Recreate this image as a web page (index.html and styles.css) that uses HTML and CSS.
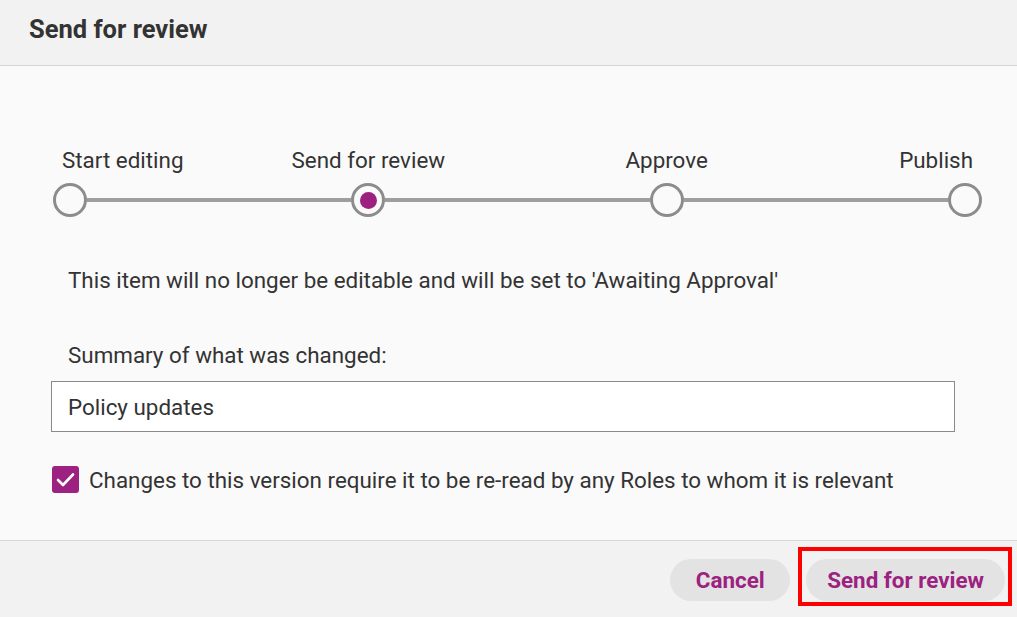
FILE: index.html
```html
<!DOCTYPE html>
<html lang="en">
<head>
    <meta charset="UTF-8">
    <meta name="viewport" content="width=device-width, initial-scale=1.0">
    <title>Send for review</title>
    <link rel="stylesheet" href="styles.css">
</head>
<body>
    <div class="dialog">
        <div class="dialog-header">
            <h2>Send for review</h2>
        </div>

        <div class="dialog-body">
            <!-- Workflow steps -->
            <div class="stepper">
                <div class="step first">
                    <span class="step-label">Start editing</span>
                    <span class="step-dot"></span>
                </div>
                <div class="step-line"></div>
                <div class="step">
                    <span class="step-label">Send for review</span>
                    <span class="step-dot current"></span>
                </div>
                <div class="step-line"></div>
                <div class="step">
                    <span class="step-label">Approve</span>
                    <span class="step-dot"></span>
                </div>
                <div class="step-line"></div>
                <div class="step last">
                    <span class="step-label">Publish</span>
                    <span class="step-dot"></span>
                </div>
            </div>

            <p class="notice">This item will no longer be editable and will be set to 'Awaiting Approval'</p>

            <div class="form-group">
                <label for="summary">Summary of what was changed:</label>
                <input type="text" id="summary" value="Policy updates">
            </div>

            <label class="check-row">
                <span class="check-box">
                    <svg width="19" height="15" viewBox="0 0 19 15"><path d="M2 8l5 5L17 2.5" fill="none" stroke="#fff" stroke-width="2.6" stroke-linecap="round" stroke-linejoin="round"/></svg>
                </span>
                Changes to this version require it to be re-read by any Roles to whom it is relevant
            </label>
        </div>

        <div class="dialog-footer">
            <button class="btn">Cancel</button>
            <span class="highlight">
                <button class="btn">Send for review</button>
            </span>
        </div>
    </div>
</body>
</html>
```

FILE: styles.css
```css
body {
    margin: 0;
    font-family: 'Roboto', 'Liberation Sans', sans-serif;
    color: #333;
    background-color: #fafafa;
}

.dialog {
    display: flex;
    flex-direction: column;
    height: 100vh;
}

.dialog-header {
    height: 57px;
    display: flex;
    align-items: center;
    padding: 0 0 8px 29px;
    background-color: #f2f2f2;
    border-bottom: 1px solid #d6d6d6;
}

.dialog-header h2 {
    margin: 0;
    font-size: 25.5px;
    font-weight: bold;
    color: #333;
}

.dialog-body {
    flex: 1;
    padding: 82px 35px 0 51px;
}

/* Stepper */
.stepper {
    display: flex;
    align-items: flex-end;
    margin-left: 2px;
}

.step {
    width: 34px;
    display: flex;
    flex-direction: column;
    align-items: center;
}

.step.first {
    align-items: flex-start;
}

.step.last {
    align-items: flex-end;
}

.step-label {
    white-space: nowrap;
    font-size: 22.4px;
    line-height: 24px;
    margin-bottom: 11px;
}

.step.first .step-label {
    margin-left: 9px;
}

.step.last .step-label {
    margin-right: 9px;
}

.step-dot {
    width: 34px;
    height: 34px;
    box-sizing: border-box;
    border: 3.5px solid #8c8c8c;
    border-radius: 50%;
    background-color: #fafafa;
    display: flex;
    align-items: center;
    justify-content: center;
}

.step-dot.current::after {
    content: "";
    width: 17px;
    height: 17px;
    border-radius: 50%;
    background-color: #9c2180;
}

.step-line {
    flex: 1;
    height: 4px;
    margin-bottom: 15px;
    background-color: #9e9e9e;
}

.notice {
    margin: 51px 0 0 17px;
    font-size: 22.4px;
    line-height: 24px;
}

.form-group {
    margin-top: 51px;
}

.form-group label {
    display: block;
    margin-left: 17px;
    font-size: 22.4px;
    line-height: 24px;
    margin-bottom: 14px;
}

.form-group input {
    width: 904px;
    height: 51px;
    box-sizing: border-box;
    padding: 0 16px;
    font-family: inherit;
    font-size: 22.4px;
    color: #333;
    border: 1px solid #8a8a8a;
    background-color: #fff;
    outline: none;
}

.check-row {
    display: flex;
    align-items: center;
    gap: 10px;
    margin-top: 34px;
    margin-left: 1px;
    font-size: 22.4px;
    line-height: 24px;
}

.check-box {
    width: 27px;
    height: 27px;
    border-radius: 3px;
    background-color: #9c2180;
    display: flex;
    align-items: center;
    justify-content: center;
}

.dialog-footer {
    height: 58px;
    display: flex;
    align-items: flex-start;
    justify-content: flex-end;
    gap: 8px;
    padding: 18px 5px 0 0;
    background-color: #f2f2f2;
    border-top: 1px solid #d6d6d6;
}

.btn {
    height: 42px;
    min-width: 120px;
    padding: 0 21px;
    border: none;
    border-radius: 21px;
    background-color: #e3e3e3;
    color: #9c2180;
    font-family: inherit;
    font-size: 22.4px;
    font-weight: bold;
    cursor: pointer;
}

.highlight {
    display: flex;
    margin-top: -12px;
    border: 4px solid #ff0000;
    padding: 8px 3px 1px 4px;
}
```
